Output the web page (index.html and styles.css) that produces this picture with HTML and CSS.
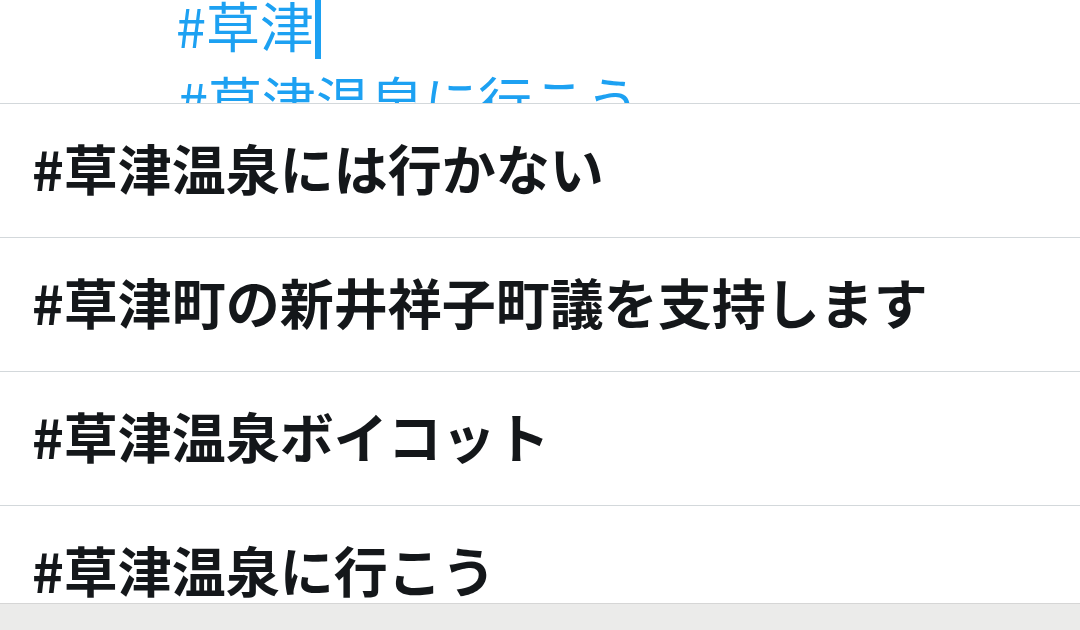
FILE: index.html
```html
<!DOCTYPE html>
<html lang="ja">
<head>
<meta charset="utf-8">
<link rel="stylesheet" href="styles.css">
</head>
<body>
<div class="screen">
  <div class="compose">
    <div class="line first">#草津<span class="caret"></span></div>
    <div class="line second">#草津温泉に行こう</div>
  </div>
  <ul class="list">
    <li class="item">#草津温泉には行かない</li>
    <li class="item">#草津町の新井祥子町議を支持します</li>
    <li class="item">#草津温泉ボイコット</li>
    <li class="item">#草津温泉に行こう</li>
  </ul>
  <div class="bar"></div>
</div>
</body>
</html>
```

FILE: styles.css
```css
html, body {
  margin: 0;
  padding: 0;
  background: #ffffff;
}
.screen {
  width: 1080px;
  height: 630px;
  display: flex;
  flex-direction: column;
  overflow: hidden;
  font-family: "Noto Sans CJK JP", "Noto Sans", sans-serif;
}
.compose {
  height: 103px;
  flex: none;
  overflow: hidden;
  padding-left: 176px;
  color: #1da1f2;
  font-size: 54px;
  line-height: 75px;
}
.line {
  white-space: nowrap;
  display: flex;
  align-items: center;
  height: 75px;
}
.first {
  margin-top: -13px;
}
.caret {
  display: inline-block;
  width: 6px;
  height: 60px;
  background: #1da1f2;
  margin-left: 1px;
  margin-top: 9px;
}
.second {
  padding-left: 2px;
}
.list {
  list-style: none;
  margin: 0;
  padding: 0;
  flex: 1;
  overflow: hidden;
}
.item {
  border-top: 1px solid #d3d8db;
  display: flex;
  align-items: center;
  padding-left: 32px;
  padding-bottom: 6px;
  box-sizing: border-box;
  height: 134px;
  font-size: 54px;
  font-weight: 700;
  color: #14171a;
  white-space: nowrap;
}
.bar {
  height: 26px;
  flex: none;
  background: #ebebea;
  border-top: 1px solid #d6d6d6;
}
```
